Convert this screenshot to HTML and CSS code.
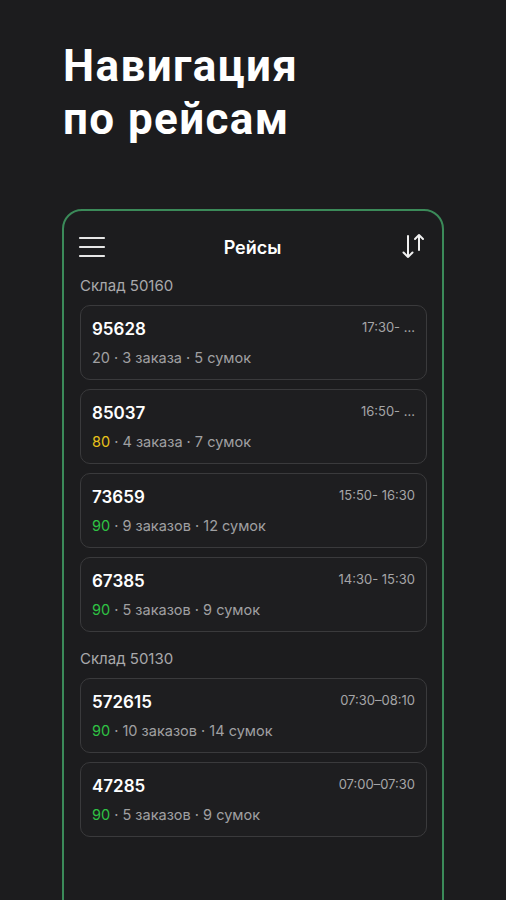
FILE: index.html
```html
<!DOCTYPE html>
<html lang="ru">
<head>
<meta charset="utf-8">
<title>Навигация по рейсам</title>
<link rel="stylesheet" href="styles.css">
</head>
<body>
<main class="page">
  <h1 class="headline">Навигация<br>по рейсам</h1>
  <section class="phone">
    <header class="topbar">
      <svg class="icon" width="28" height="24" viewBox="0 0 28 24" aria-hidden="true">
        <path d="M2 3h24M2 12h24M2 21h24" stroke="#e6e6e6" stroke-width="2.2" stroke-linecap="round" fill="none"/>
      </svg>
      <div class="topbar-title">Рейсы</div>
      <svg class="icon" width="28" height="28" viewBox="0 0 28 28" aria-hidden="true">
        <path d="M9 3v21M4.5 19.5L9 24l4.5-4.5" stroke="#f0f0f0" stroke-width="2" stroke-linecap="round" stroke-linejoin="round" fill="none"/>
        <path d="M20 17V2M16 6l4-4 4 4" stroke="#f0f0f0" stroke-width="2" stroke-linecap="round" stroke-linejoin="round" fill="none"/>
      </svg>
    </header>

    <div class="group">
      <div class="group-label">Склад 50160</div>
      <article class="trip">
        <div class="trip-row"><span class="trip-id">95628</span><span class="trip-time">17:30- ...</span></div>
        <div class="trip-meta"><span class="score">20</span> · 3 заказа · 5 сумок</div>
      </article>
      <article class="trip">
        <div class="trip-row"><span class="trip-id">85037</span><span class="trip-time">16:50- ...</span></div>
        <div class="trip-meta"><span class="score score-warn">80</span> · 4 заказа · 7 сумок</div>
      </article>
      <article class="trip">
        <div class="trip-row"><span class="trip-id">73659</span><span class="trip-time">15:50- 16:30</span></div>
        <div class="trip-meta"><span class="score score-ok">90</span> · 9 заказов · 12 сумок</div>
      </article>
      <article class="trip">
        <div class="trip-row"><span class="trip-id">67385</span><span class="trip-time">14:30- 15:30</span></div>
        <div class="trip-meta"><span class="score score-ok">90</span> · 5 заказов · 9 сумок</div>
      </article>
    </div>

    <div class="group">
      <div class="group-label">Склад 50130</div>
      <article class="trip">
        <div class="trip-row"><span class="trip-id">572615</span><span class="trip-time">07:30–08:10</span></div>
        <div class="trip-meta"><span class="score score-ok">90</span> · 10 заказов · 14 сумок</div>
      </article>
      <article class="trip">
        <div class="trip-row"><span class="trip-id">47285</span><span class="trip-time">07:00–07:30</span></div>
        <div class="trip-meta"><span class="score score-ok">90</span> · 5 заказов · 9 сумок</div>
      </article>
    </div>
  </section>
</main>
</body>
</html>
```
FILE: styles.css
```css
html, body {
  margin: 0;
  padding: 0;
  background: #1c1c1e;
  height: 100%;
  overflow: hidden;
}
body {
  font-family: Inter, Roboto, "Noto Sans", sans-serif;
  color: #f2f2f2;
}
.page {
  display: flex;
  flex-direction: column;
  padding: 40px 0 0 62px;
}
.headline {
  margin: 0 0 0 1px;
  font-family: Roboto, Inter, sans-serif;
  font-weight: 700;
  font-size: 44px;
  line-height: 53px;
  letter-spacing: 1.4px;
  color: #ffffff;
}
.phone {
  margin-top: 63px;
  width: 382px;
  height: 760px;
  border: 2px solid #3b8a59;
  border-radius: 20px;
  padding: 0 15px 0 16px;
  box-sizing: border-box;
  display: flex;
  flex-direction: column;
}
.topbar {
  display: flex;
  align-items: center;
  justify-content: space-between;
  height: 28px;
  margin-top: 22px;
}
.topbar .icon:first-child {
  margin-left: -2px;
}
.topbar-title {
  font-weight: 600;
  font-size: 18px;
  color: #ffffff;
}
.group {
  display: flex;
  flex-direction: column;
  gap: 9px;
  margin-top: 15px;
}
.group + .group {
  margin-top: 17px;
}
.group-label {
  font-size: 15px;
  line-height: 20px;
  color: #a9a9ab;
}
.trip {
  border: 1px solid #3a3a3c;
  border-radius: 10px;
  padding: 12px 11px 11px;
  display: flex;
  flex-direction: column;
  gap: 8px;
  background: #1e1e20;
}
.trip-row {
  display: flex;
  justify-content: space-between;
  align-items: flex-start;
}
.trip-id {
  font-weight: 600;
  font-size: 17px;
  line-height: 22px;
  color: #ffffff;
}
.trip-time {
  font-size: 13px;
  line-height: 18px;
  color: #a5a5a7;
}
.trip-meta {
  font-size: 14.5px;
  line-height: 20px;
  color: #a0a0a2;
}
.score-warn {
  color: #e8c21a;
}
.score-ok {
  color: #2fc244;
}
```
